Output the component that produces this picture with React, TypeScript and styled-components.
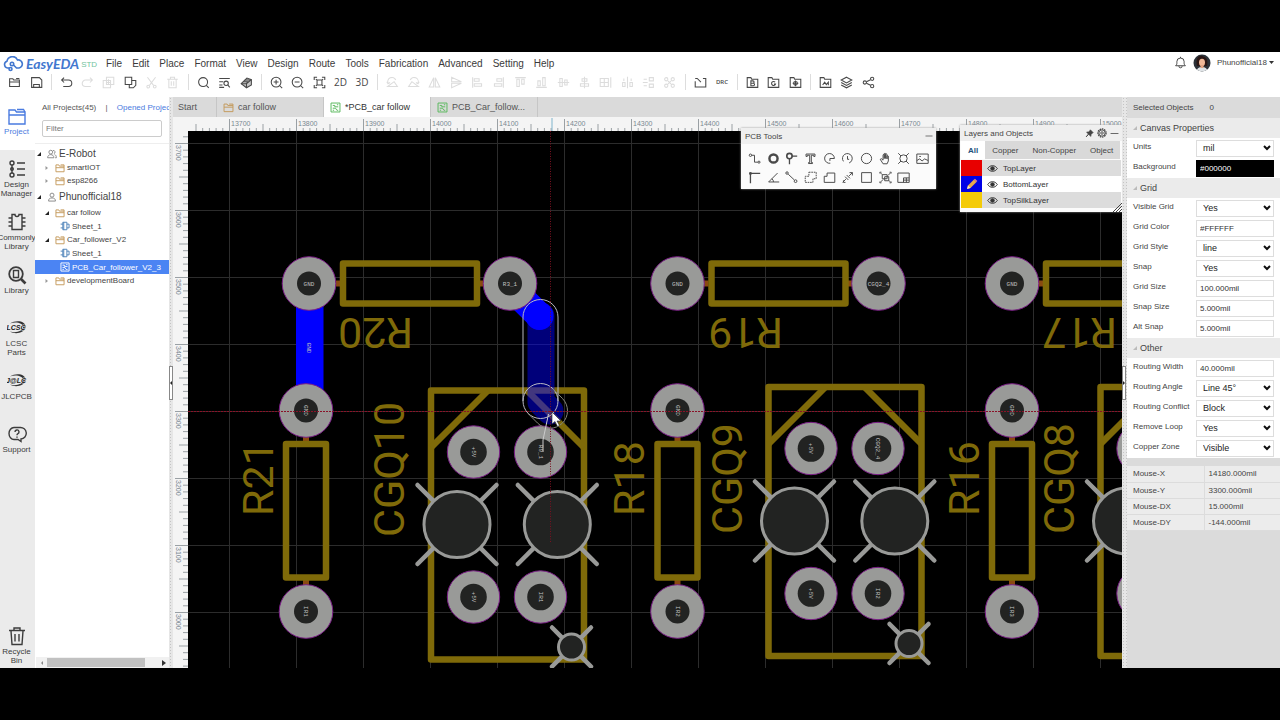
import React, { useEffect, useState } from 'react';
import styled, { createGlobalStyle } from 'styled-components';

const SILK = '#7f6a09';
const COPPER = '#999a98';
const HOLE = '#222322';

const GlobalStyle = createGlobalStyle`
  *, *::before, *::after { box-sizing: border-box; }
  body { margin: 0; background: #000; }
  body, button, input, select { font-family: "Liberation Sans", Arial, sans-serif; }
  button { border: 0; padding: 0; margin: 0; background: none; color: inherit; }
  a { color: inherit; text-decoration: none; }
`;

/* ---------- icons ---------- */

const glyphs: Record<string, React.ReactNode> = {
  open: <><path d="M2 13V3.5h4l1 1.5h7V13z" /><path d="M2 7.5h12M10 3h4" /></>,
  save: <><path d="M2 2h9.5L14.500 5v9H2z" /><path d="M4.500 14v-3.500h7V14" /></>,
  undo: <path d="M5 2 2 5l3 3M2 5h8.500a4 4 0 0 1 0 8H4" />,
  redo: <path d="m11 2 3 3-3 3M14 5H5.500a4 4 0 0 0 0 8H12" />,
  duplicate: <><path d="M5.500 1.500h9v9h-9z" /><path d="M1.500 5.500h9v9h-9zM8 4v6M5 8h6" /></>,
  copy: <><path d="M1.500 1.500h8v9h-8z" /><path d="M9.500 5.500h5v6l-3 3h-5v-4" /></>,
  cut: <><path d="m3 1.500 7.500 10M13 1.500l-7.500 10" /><circle cx="4" cy="13" r="1.700" /><circle cx="12" cy="13" r="1.700" /></>,
  trash: <><path d="M1.500 4h13M5.500 4V1.500h5V4M3.500 4v10.500h9V4M6.500 6.500v5.500M9.500 6.500v5.500" /></>,
  search: <><circle cx="7.500" cy="7.500" r="5.500" /><path d="m11.500 11.500 3 3" /></>,
  find: <><path d="M1.500 3h13M1.500 7h5M1.500 11h4M1.500 14h6" /><circle cx="10" cy="9" r="2.700" /><path d="m12 11 2.500 3" /></>,
  eraser: <><path d="m1.500 9.500 7-7 5.500 2v6.500l-6 3.500z" fill="currentColor" fillOpacity=".3" /><path d="M1.500 9.500h6.500l6-5M8 14.500v-5M4 7h6.500l-3 2.500M6 5h6" /></>,
  zoomIn: <><circle cx="7.500" cy="7.500" r="6" /><path d="M4.500 7.500h6M7.500 4.500v6M12 12l3 3" /></>,
  zoomOut: <><circle cx="7.500" cy="7.500" r="6" /><path d="M4.500 7.500h6M12 12l3 3" /></>,
  fit: <><path d="M1.500 5V1.500H5M11 1.500h3.500V5M14.500 11v3.500H11M5 14.500H1.500V11" /><path d="M5 5h6v6H5zM3.500 4l1.500 1M12.500 4 11 5M3.500 12 5 11M12.500 12 11 11" /></>,
  rotateL: <><path d="M2 13h12l-4-6z" /><path d="M2.500 9A5 5 0 0 1 12 5M1 7l1.500 2.500L5 8" /></>,
  rotateR: <><path d="M2 13h12L6 7z" /><path d="M13.500 9A5 5 0 0 0 4 5M15 7l-1.500 2.500L11 8" /></>,
  flipH: <path d="M7 2v11.500H1.500zM9 2v11.500h5.500z" />,
  flipV: <path d="M2 7V1.500L14 7zM2 9v5.500L14 9z" />,
  alignL: <path d="M2 1.500v13M4 3.500h6v3H4zM4 9.500h9v3H4z" />,
  alignR: <path d="M14 1.500v13M6 3.500h6v3H6zM3 9.500h9v3H3z" />,
  alignT: <path d="M1.500 2h13M3.500 4h3v9h-3zM9.500 4h3v6h-3z" />,
  alignB: <path d="M1.500 14h13M3.500 6h3v6h-3zM9.500 2h3v10h-3z" />,
  alignC: <path d="M1 8h14M3.500 3h3v10h-3zM9.500 5h3v6h-3z" />,
  alignM: <path d="M8 1v14M5 3.500h6v3H5zM3 9.500h10v3H3z" />,
  gridArr: <path d="M1.500 3h10v10h-10zM1.500 8h10M6.500 3v10M14.500 1.500v13" />,
  distH: <path d="M8 1v14M2 8h3v5H2zM11 8h3v5h-3zM3.500 3v3M12.500 3v3" />,
  distV: <path d="M1 8h6M9 2h5v4H9zM9 10h5v4H9zM2 4h4M2 12h4" />,
  distArr: <><circle cx="4" cy="4" r="2" /><circle cx="12" cy="4" r="2" /><circle cx="4" cy="12" r="2" /><circle cx="12" cy="12" r="2" /><path d="M6 6l4 4M10 6l-4 4" /></>,
  outline: <path d="M1.500 6.500v7h13V3H11M1.500 3H4l4.500 4.500" />,
  folderB: <><path d="M1.500 14V2H6l1 2h7.500v10z" /><path d="M6 6h2.500a1.300 1.300 0 0 1 0 3H6zm0 3h3a1.300 1.300 0 0 1 0 3H6z" /></>,
  folderG: <><path d="M1.500 14V2H6l1 2h7.500v10z" /><path d="M10 7.500A2.500 2.500 0 1 0 10.500 10H8.500" /></>,
  folderD: <><path d="M1.500 14V2H6l1 2h7.500v10z" /><circle cx="8" cy="9" r="2.300" /><path d="M8 5.500v7M4.500 9h7" /></>,
  folderL: <><path d="M1.500 14V2H6l1 2h7.500v10z" /><path d="M4.500 11 7 7.500l2 3 2.500-3v4" /></>,
  layers: <><path d="M8 1.500 14.500 5 8 8.500 1.500 5zM1.500 8 8 11.500 14.500 8M1.500 11 8 14.500 14.500 11" /></>,
  share: <><circle cx="3.500" cy="8" r="2" /><circle cx="12.500" cy="3.500" r="2" /><circle cx="12.500" cy="12.500" r="2" /><path d="m5.500 7 5-2.500M5.500 9l5 2.500" /></>,
  bell: <><path d="M2 12c2-2 1.500-3 1.500-5a4.500 4.500 0 0 1 9 0c0 2-.5 3 1.500 5zM6 12.500a2 2 0 0 0 4 0M8 1v1.500" /></>,
  folder: <><path d="M1.500 14V3h4.500l1 2h7.500v9zM1.500 7.500h13M9 3h5.500v2" /></>,
  sheet: <><path d="M4.500 2H11v12H4.500z" /><path d="M1 5h3.500M1 11h3.500M11 5h3.500v6H11M6 2v12" /></>,
  pcb: <><path d="M1.500 1.500h13v13h-13z" /><path d="M4 5h3v2h5M4 9h4l2 3h2M4 12h2M10 4h2" /></>,
  group: <><circle cx="6" cy="5" r="3" /><path d="M1 14c0-3 2-5 5-5s5 2 5 5zM9.500 2.500A2.500 2.500 0 1 1 11 7.500M12 9c2 .5 3 2 3 5h-2" /></>,
  user: <><circle cx="8" cy="5" r="3.200" /><path d="M2.500 14.500c0-3.500 2-5 5.500-5s5.500 1.500 5.500 5z" /></>,
  /* drawing tools */
  track: <><circle cx="3" cy="4" r="1.500" /><path d="M4.500 4H8v8.500h4" /><circle cx="13.500" cy="12.500" r="1.300" /></>,
  pad: <circle cx="8" cy="8" r="5" strokeWidth="3" />,
  via: <><circle cx="5.500" cy="5" r="3.300" strokeWidth="2" /><path d="M8.500 5H15M5.500 8v7" strokeWidth="1.600" /></>,
  text: <path d="M2.500 5.500v-3h11v3h-1.500V4H9v9h1.500v1.200h-5V13H7V4H4v1.500z" />,
  arc: <path d="M8.500 8h5.500A6 6 0 1 0 9 13.800M8.500 8v3" />,
  arcC: <path d="M3 11.500A6 6 0 1 1 10 13.500M8 5v4h2" />,
  circle: <circle cx="8" cy="8" r="6.300" />,
  hand: <path d="M5 14.500 1.500 9l1.500-.7L5 10V3.500q1-1.500 1.500 0V8 2q1-1.500 1.700 0v6V3q1-1.300 1.700 0v5.500V5q1-1.200 1.600 0V11l-1.500 3.500z" />,
  hole: <><circle cx="8" cy="8" r="4.500" /><path d="m1.500 1.500 3.400 3.400M14.500 1.500l-3.400 3.400M1.500 14.500l3.400-3.400M14.500 14.500l-3.400-3.400" /></>,
  image: <><path d="M1 2.500h14v11.500H1z" /><path d="m1 10.500 3.500-2 3 2.500 3-2.500 4.500 2M4 5.500h2" /></>,
  canvasOrigin: <><path d="M3 15V3H15" strokeWidth="1.600" /><path d="M2 2h2v2H2z" fill="currentColor" /></>,
  protractor: <path d="M13 2.500 2 13.500h13M6 9.500a5 5 0 0 1 2 4" />,
  connect: <><circle cx="2.500" cy="2.500" r="1.500" /><path d="m4 4 7.500 7" /><circle cx="13" cy="12.500" r="1.700" /></>,
  copperArea: <path d="M6 1.500h9v8h-4V14H1.500V6.500H6z" strokeDasharray="2 1" />,
  solid: <path d="M1.500 6.500H5v-4h9.500v11.500h-13z" />,
  dimension: <path d="m2 14 4-4M10 6l4-4M5 7l4 4M7 5l4 4M3 11.500v2.500h2.500M10.500 2H14v3.500" />,
  rect: <path d="M2 2h12v12H2z" />,
  groupTool: <><path d="M4 4.500h6v5H4zM7 7h5v5H7z" /><path d="M1 3V1.500h2M13 1.500h2V3M15 13v1.500h-2M3 14.500H1V13M2 2.500l2 2M14 2.500l-3 3M2 13.500l3-3M14 13.500l-2-2" /></>,
  panelize: <><path d="M1 2.500h14v11.500H1z" /><path d="M8 8.500h7M8 8.500V14M11.500 8.500V14M8 11.200h7" /></>,
  eye: <><path d="M1 8c3.500-5.500 10.500-5.500 14 0-3.500 5.500-10.500 5.500-14 0z" /><circle cx="8" cy="8" r="2.600" fill="currentColor" /></>,
  pin: <path d="m9.500 1.500 5 5-1.500.5-2.500 3v3L6.500 9.500 2 14l4-5L3 5.500h3l3-2.500z" fill="currentColor" />,
  gear: <><circle cx="8" cy="8" r="6.500" strokeWidth="2" strokeDasharray="2.500 1.200" /><circle cx="8" cy="8" r="5" /><circle cx="8" cy="8" r="2" /></>,
  minus: <path d="M1 8h14" />,
};

const Svg = styled.svg<{ $size: number; $weight: number }>`
  display: block;
  flex: none;
  width: ${(p) => p.$size}px;
  height: ${(p) => p.$size}px;
  fill: none;
  stroke: currentColor;
  stroke-width: ${(p) => p.$weight};
`;

const Icon = ({ name, size = 12, weight = 1.4 }: { name: string; size?: number; weight?: number }) => (
  <Svg viewBox="0 0 16 16" $size={size} $weight={weight} aria-hidden="true">{glyphs[name]}</Svg>
);

/* ---------- shell ---------- */

const Frame = styled.div`
  display: flex;
  flex-direction: column;
  height: 100vh;
  min-height: 640px;
  padding: 52px 0;
  background: #000;
  color: #444;
  font-size: 8px;
`;

const Header = styled.header`
  display: flex;
  justify-content: space-between;
  height: 45px;
  flex: none;
  background: #fff;
  overflow: hidden;
`;

const MenuRow = styled.div`
  display: flex;
  align-items: center;
  height: 23px;
`;

const Logo = styled.a`
  display: flex;
  align-items: center;
  gap: 2px;
  width: 101px;
  padding-left: 3px;
  color: #4277cf;
  font: italic 700 14px/20px Lato, sans-serif;
  white-space: nowrap;
`;

const Edition = styled.span`
  color: #72c39c;
  font: 8px/10px "Liberation Sans", Arial, sans-serif;
  padding-top: 2px;
`;

const Menu = styled.nav`
  display: flex;
  gap: 10px;
  padding-left: 5px;
  font-size: 10px;
  line-height: 14px;
  color: #3b3b3b;
`;

const ToolRow = styled.div`
  display: flex;
  align-items: center;
  height: 14px;
  padding-left: 6px;
`;

const ToolGroup = styled.div<{ $width: number }>`
  display: flex;
  justify-content: space-between;
  flex: none;
  width: ${(p) => p.$width}px;
`;

const ToolButton = styled.button<{ $off?: boolean }>`
  display: grid;
  place-items: center;
  width: 16px;
  height: 14px;
  color: ${(p) => (p.$off ? '#dcdcdc' : '#484848')};
`;

const ToolWord = styled.span<{ $small?: boolean }>`
  font: ${(p) => (p.$small ? '600 6px' : '400 10px')}/12px "Open Sans", sans-serif;
`;

const Separator = styled.span`
  flex: none;
  width: 14px;
  height: 16px;
  background: linear-gradient(#ddd, #ddd) center / 1px 100% no-repeat;
`;

const Account = styled.div`
  display: flex;
  align-items: center;
  gap: 6px;
  height: 21px;
  padding-right: 6px;
`;

const AccountName = styled.button`
  display: flex;
  align-items: center;
  gap: 2px;
  font-size: 8px;
  color: #444;
`;

const Main = styled.main`
  display: flex;
  flex: 1;
  min-height: 0;
`;

/* ---------- left rail and project panel ---------- */

const Rail = styled.nav`
  display: flex;
  flex-direction: column;
  flex: none;
  width: 35px;
  background: #ebebeb;
  overflow: hidden;
`;

const RailButton = styled.button<{ $active?: boolean; $last?: boolean }>`
  display: flex;
  flex-direction: column;
  align-items: center;
  gap: 1px;
  flex: none;
  width: ${(p) => (p.$active ? 35 : 33)}px;
  height: ${(p) => (p.$last ? 51 : 53)}px;
  margin-top: ${(p) => (p.$last ? 'auto' : 0)};
  padding-top: 9px;
  padding-right: ${(p) => (p.$active ? 2 : 0)}px;
  background: ${(p) => (p.$active ? '#fff' : 'transparent')};
  color: ${(p) => (p.$active ? '#4a7be0' : '#3c3c3c')};
  font-size: 8px;
  line-height: 9px;
`;

const RailArt = styled.svg`
  display: block;
  width: 20px;
  height: 20px;
  flex: none;
  fill: none;
  stroke: currentColor;
  stroke-width: 1.4;
`;

const RailLabel = styled.span`
  white-space: pre;
  text-align: center;
`;

const ProjectPanel = styled.aside`
  display: flex;
  flex-direction: column;
  flex: none;
  width: 134px;
  background: #fff;
  overflow: hidden;
  white-space: nowrap;
`;

const ProjectTabs = styled.div`
  display: flex;
  gap: 7px;
  height: 23px;
  padding: 6px 0 0 7px;
  line-height: 10px;
  color: #555;
`;

const BlueLink = styled.a`
  color: #4a7be0;
`;

const FilterBox = styled.input`
  width: 120px;
  height: 17px;
  margin: 0 7px 6px;
  padding: 0 3px;
  border: 1px solid #ccc;
  border-radius: 2px;
  background: #fff;
  font-size: 8px;
  color: #444;
  &::placeholder { color: #777; opacity: 1; }
`;

const Tree = styled.ul`
  flex: 1;
  min-height: 0;
  margin: 0;
  padding: 2px 0 0;
  border-top: 1px solid #eee;
  list-style: none;
`;

const treeHeight = { first: 15, owner: 19, folder: 13, file: 14 };
const treeIndent = { first: 1, owner: 1, folder: 9, file: 25 };

const TreeRow = styled.li<{ $kind: keyof typeof treeHeight; $selected?: boolean }>`
  display: flex;
  align-items: center;
  gap: 2px;
  height: ${(p) => treeHeight[p.$kind]}px;
  padding-left: ${(p) => treeIndent[p.$kind]}px;
  font-size: ${(p) => (p.$kind === 'first' || p.$kind === 'owner' ? 10 : 8)}px;
  background: ${(p) => (p.$selected ? '#4b84f3' : 'transparent')};
  color: ${(p) => (p.$selected ? '#fff' : '#444')};
`;

const Twisty = styled.svg`
  width: 6px;
  height: 6px;
  margin-right: 3px;
  flex: none;
`;

const TreeIcon = styled.span<{ $color: string }>`
  color: ${(p) => p.$color};
`;

const ScrollTrack = styled.div`
  display: flex;
  align-items: center;
  justify-content: space-between;
  height: 11px;
  margin-left: 1px;
  padding: 0 3px 0 4px;
  background: #f1f1f1;
`;

const ScrollThumb = styled.div`
  flex: 1;
  height: 9px;
  margin: 0 17px 0 3px;
  background: #c1c1c1;
`;

const Splitter = styled.div<{ $wide?: boolean }>`
  display: flex;
  align-items: center;
  flex: none;
  width: ${(p) => (p.$wide ? 5 : 4)}px;
  background: radial-gradient(#c4c4c4 1px, #e6e6e6 1px) 0 0 / 3px 3px;
`;

const SplitHandle = styled.button`
  display: grid;
  place-items: center;
  width: 4px;
  height: 34px;
  border: 1px solid #888;
  background: #fff;
`;

/* ---------- editor ---------- */

const Editor = styled.section`
  display: flex;
  flex-direction: column;
  flex: 1;
  min-width: 0;
`;

const DocTabs = styled.div`
  display: flex;
  flex: none;
  height: 20px;
  background: #dadada;
`;

const DocTab = styled.button<{ $active?: boolean; $home?: boolean }>`
  display: flex;
  align-items: center;
  gap: 4px;
  flex: none;
  width: ${(p) => (p.$home ? 44 : 107)}px;
  padding-left: ${(p) => (p.$home ? 5 : 6)}px;
  border-right: 1px solid #c6c6c6;
  background: ${(p) => (p.$active ? '#fff' : 'transparent')};
  color: ${(p) => (p.$active ? '#333' : '#555')};
  font-size: 9px;
  white-space: nowrap;
`;

const Workspace = styled.div`
  position: relative;
  display: flex;
  flex-direction: column;
  flex: 1;
  min-height: 0;
  background: #f4f4f4;
  overflow: hidden;
`;

const RulerTop = styled.svg`
  display: block;
  flex: none;
  width: 100%;
  height: 14px;
`;

const CanvasRow = styled.div`
  display: flex;
  flex: 1;
  min-height: 0;
`;

const RulerLeft = styled.svg`
  display: block;
  flex: none;
  width: 15px;
  height: 100%;
`;

const Board = styled.svg`
  display: block;
  flex: 1;
  min-width: 0;
  height: 100%;
  background: #000;
`;

const FloatPanel = styled.div<{ $top: number; $right: number; $width: number }>`
  position: absolute;
  top: ${(p) => p.$top}px;
  right: ${(p) => p.$right}px;
  width: ${(p) => p.$width}px;
  background: #fbfbfb;
  box-shadow: 0 0 2px #999;
`;

const FloatTitle = styled.div`
  display: flex;
  align-items: center;
  gap: 3px;
  height: 16px;
  padding: 0 3px 0 4px;
  background: #efefef;
  color: #444;
`;

const Grow = styled.span`
  flex: 1;
`;

const ToolGrid = styled.div`
  display: grid;
  grid-template-columns: repeat(10, 1fr);
  grid-auto-rows: 19px;
  padding: 5px 4px 2px;
`;

const GridButton = styled.button`
  display: grid;
  place-items: center;
  color: #4a4a4a;
`;

const LayerTabs = styled.div`
  display: flex;
  height: 18px;
  margin: 0 2px 1px 1px;
  background: #d9d9d9;
`;

const LayerTab = styled.button<{ $active?: boolean }>`
  padding: 0 7px;
  background: ${(p) => (p.$active ? '#fff' : 'transparent')};
  color: ${(p) => (p.$active ? '#23527c' : '#444')};
  font-size: 8px;
  font-weight: ${(p) => (p.$active ? 700 : 400)};
  white-space: nowrap;
`;

const LayerRow = styled.div<{ $shaded?: boolean }>`
  display: flex;
  align-items: center;
  gap: 5px;
  height: 16px;
  margin: 0 1px;
  background: ${(p) => (p.$shaded ? '#dcdcdc' : '#fff')};
  color: #333;
`;

const Swatch = styled.span<{ $color: string }>`
  display: grid;
  place-items: center;
  width: 21px;
  height: 16px;
  background: ${(p) => p.$color};
`;

const ResizeCorner = styled.svg`
  display: block;
  width: 9px;
  height: 9px;
  margin: -5px 0 0 auto;
  position: relative;
`;

/* ---------- properties ---------- */

const Properties = styled.aside`
  flex: none;
  width: 153px;
  background: #dbdbdb;
  overflow: hidden;
`;

const Selected = styled.div`
  display: flex;
  align-items: center;
  gap: 16px;
  height: 21px;
  padding-left: 6px;
`;

const SectionTitle = styled.h2`
  display: flex;
  align-items: center;
  gap: 3px;
  height: 20px;
  margin: 0;
  padding-left: 6px;
  background: #ebebeb;
  font-size: 9px;
  font-weight: 400;
  color: #444;
`;

const Field = styled.div`
  display: flex;
  align-items: center;
  height: 20px;
  padding-left: 6px;
  background: #fff;
`;

const FieldLabel = styled.label`
  width: 63px;
  padding-bottom: 3px;
  white-space: nowrap;
`;

const TextField = styled.input<{ $dark?: boolean }>`
  width: 78px;
  height: 17px;
  padding: 0 3px;
  border: 1px solid ${(p) => (p.$dark ? '#000' : '#ddd')};
  background: ${(p) => (p.$dark ? '#000' : '#fff')};
  color: ${(p) => (p.$dark ? '#fff' : '#333')};
  font-size: 8px;
`;

const SelectWrap = styled.span`
  display: grid;
  align-items: center;
  width: 78px;
  & > * { grid-area: 1 / 1; }
`;

const SelectBox = styled.select`
  width: 100%;
  height: 17px;
  padding: 0 6px;
  border: 1px solid #ddd;
  border-radius: 0;
  appearance: none;
  background: #fff;
  color: #222;
  font-size: 9px;
`;

const Chevron = styled.svg`
  justify-self: end;
  width: 8px;
  height: 6px;
  margin-right: 3px;
  fill: none;
  stroke: #111;
  stroke-width: 2;
  pointer-events: none;
`;

const Readout = styled.table`
  width: 100%;
  margin-top: 8px;
  border-collapse: collapse;
  background: #ececec;
  td, th {
    height: 16px;
    padding: 0 4px 0 6px;
    border-bottom: 1px solid #dcdcdc;
    font-weight: 400;
    text-align: left;
  }
  th { width: 77px; border-right: 1px solid #dcdcdc; }
  td { padding-left: 4px; }
`;

/* ---------- data ---------- */

type Tool = [name: string, label: string, off?: boolean];

const toolGroups: { width: number; tools: Tool[] }[] = [
  { width: 38, tools: [['open', 'Open'], ['save', 'Save']] },
  { width: 123, tools: [['undo', 'Undo'], ['redo', 'Redo', true], ['duplicate', 'Duplicate', true], ['copy', 'Copy'], ['cut', 'Cut', true], ['trash', 'Delete', true]] },
  { width: 59, tools: [['search', 'Search'], ['find', 'Find'], ['eraser', 'Cleanup']] },
  { width: 102, tools: [['zoomIn', 'Zoom in'], ['zoomOut', 'Zoom out'], ['fit', 'Fit'], ['2D', '2D'], ['3D', '3D']] },
  {
    width: 294,
    tools: ['rotateL', 'rotateR', 'flipH', 'flipV', 'alignL', 'alignR', 'alignT', 'alignB', 'alignC', 'alignM', 'gridArr', 'distH', 'distV', 'distArr']
      .map((n): Tool => [n, n, true]),
  },
  { width: 38, tools: [['outline', 'Board outline'], ['DRC', 'DRC']] },
  { width: 59, tools: [['folderB', 'BOM'], ['folderG', 'Gerber'], ['folderD', 'Pick and place']] },
  { width: 59, tools: [['folderL', 'Import'], ['layers', 'Layers'], ['share', 'Share']] },
];

const menus = ['File', 'Edit', 'Place', 'Format', 'View', 'Design', 'Route', 'Tools', 'Fabrication', 'Advanced', 'Setting', 'Help'];

const drawTools = [
  'track', 'pad', 'via', 'text', 'arc', 'arcC', 'circle', 'hand', 'hole', 'image',
  'canvasOrigin', 'protractor', 'connect', 'copperArea', 'solid', 'dimension', 'rect', 'groupTool', 'panelize',
];

type TreeItem = { kind: keyof typeof treeHeight; text: string; icon: string; color: string; open?: boolean; selected?: boolean };

const tree: TreeItem[] = [
  { kind: 'first', text: 'E-Robot', icon: 'group', color: '#888', open: true },
  { kind: 'folder', text: 'smartIOT', icon: 'folder', color: '#c49a5c' },
  { kind: 'folder', text: 'esp8266', icon: 'folder', color: '#c49a5c' },
  { kind: 'owner', text: 'Phunofficial18', icon: 'user', color: '#888', open: true },
  { kind: 'folder', text: 'car follow', icon: 'folder', color: '#c49a5c', open: true },
  { kind: 'file', text: 'Sheet_1', icon: 'sheet', color: '#4a80b8' },
  { kind: 'folder', text: 'Car_follower_V2', icon: 'folder', color: '#c49a5c', open: true },
  { kind: 'file', text: 'Sheet_1', icon: 'sheet', color: '#4a80b8' },
  { kind: 'file', text: 'PCB_Car_follower_V2_3', icon: 'pcb', color: '#fff', selected: true },
  { kind: 'folder', text: 'developmentBoard', icon: 'folder', color: '#c49a5c' },
];

type FieldSpec = { label: string; value: string; select?: boolean; dark?: boolean };

const sections: { title: string; fields: FieldSpec[] }[] = [
  {
    title: 'Canvas Properties',
    fields: [
      { label: 'Units', value: 'mil', select: true },
      { label: 'Background', value: '#000000', dark: true },
    ],
  },
  {
    title: 'Grid',
    fields: [
      { label: 'Visible Grid', value: 'Yes', select: true },
      { label: 'Grid Color', value: '#FFFFFF' },
      { label: 'Grid Style', value: 'line', select: true },
      { label: 'Snap', value: 'Yes', select: true },
      { label: 'Grid Size', value: '100.000mil' },
      { label: 'Snap Size', value: '5.000mil' },
      { label: 'Alt Snap', value: '5.000mil' },
    ],
  },
  {
    title: 'Other',
    fields: [
      { label: 'Routing Width', value: '40.000mil' },
      { label: 'Routing Angle', value: 'Line 45°', select: true },
      { label: 'Routing Conflict', value: 'Block', select: true },
      { label: 'Remove Loop', value: 'Yes', select: true },
      { label: 'Copper Zone', value: 'Visible', select: true },
    ],
  },
];

const mouse = [
  ['Mouse-X', '14180.000mil'],
  ['Mouse-Y', '3300.000mil'],
  ['Mouse-DX', '15.000mil'],
  ['Mouse-DY', '-144.000mil'],
];

/* ---------- board drawing ---------- */

const GRID = 67;

type Point = { x: number; y: number };

const Legend = ({ x, y, turn = 0, children }: Point & { turn?: number; children: string }) => (
  <text
    transform={`translate(${x} ${y}) rotate(${turn})`}
    textAnchor="middle"
    y="2"
    fontFamily="Liberation Mono, monospace"
    fontSize="6"
    fill="#c0c0c0"
  >
    {children}
  </text>
);

const Pad = ({ x, y, net, turn, small }: Point & { net?: string; turn?: number; small?: boolean }) => (
  <g>
    <circle cx={x} cy={y} r={small ? 26.2 : 26.8} fill={COPPER} stroke="#7a1d86" />
    <circle cx={x} cy={y} r={small ? 13.3 : 12} fill={HOLE} />
    {net && <Legend x={x} y={y} turn={turn}>{net}</Legend>}
  </g>
);

const SilkText = ({ x, y, turn, children }: Point & { turn: number; children: string }) => (
  <text transform={`translate(${x} ${y}) rotate(${turn})`} fontFamily="Roboto, sans-serif" fontSize="43" fill={SILK}>
    {children}
  </text>
);

const ResistorH = ({ x, y, right }: Point & { right?: string }) => (
  <g>
    <path d={`M${x + 26} ${y}h5M${x + 170} ${y}h6`} stroke="#8a4a10" strokeWidth="6" />
    <rect x={x + 34} y={y - 20} width="134" height="40" fill="none" stroke={SILK} strokeWidth="6.500" strokeLinejoin="round" />
    <Pad x={x} y={y} net="GND" />
    <Pad x={x + 201} y={y} net={right} />
  </g>
);

const ResistorV = ({ x, y, bottom }: Point & { bottom: string }) => (
  <g>
    <path d={`M${x} ${y + 26}v5M${x} ${y + 169}v6`} stroke="#8a4a10" strokeWidth="6" />
    <rect x={x - 20} y={y + 33.500} width="40" height="133.500" fill="none" stroke={SILK} strokeWidth="6.500" strokeLinejoin="round" />
    <Pad x={x} y={y} net="GND" turn={90} />
    <Pad x={x} y={y + 201} net={bottom} turn={90} />
  </g>
);

const Drill = ({ x, y, r, reach }: Point & { r: number; reach: number }) => {
  const k = r * 0.707;
  return (
    <g stroke={COPPER} strokeLinecap="round">
      {[[-1, -1], [1, -1], [-1, 1], [1, 1]].map(([sx, sy]) => (
        <path key={`${sx}${sy}`} d={`M${x + sx * k} ${y + sy * k}L${x + sx * reach} ${y + sy * reach}`} strokeWidth="4.500" />
      ))}
      <circle cx={x} cy={y} r={r} fill={HOLE} strokeWidth="3" />
    </g>
  );
};

/* Sensor footprint; x and y are the top left corner of its silkscreen box. */
const Sensor = ({ x, y, power, signal, input }: Point & { power?: string; signal?: string; input?: string }) => (
  <g>
    <g fill="none" stroke={SILK} strokeWidth="6.500" strokeLinejoin="round">
      <rect x={x} y={y} width="153" height="269" />
      <path d={`M${x + 57} ${y}L${x} ${y + 57}M${x + 96} ${y}L${x + 153} ${y + 57}`} />
    </g>
    <Pad x={x + 42.500} y={y + 61.500} net={power} turn={90} small />
    <Pad x={x + 109.500} y={y + 61.500} net={signal} turn={90} small />
    <Pad x={x + 42.500} y={y + 206.500} net={power} turn={90} small />
    <Pad x={x + 109.500} y={y + 206.500} net={input} turn={90} small />
    <Drill x={x + 26} y={y + 134} r={33} reach={39.500} />
    <Drill x={x + 126.300} y={y + 134} r={33} reach={39.500} />
    <Drill x={x + 140.500} y={y + 256.500} r={13} reach={19.500} />
  </g>
);

const BoardDrawing = () => (
  <Board role="img" aria-label="PCB layout">
    <defs>
      <pattern id="grid" x="41" y="12" width={GRID} height={GRID} patternUnits="userSpaceOnUse">
        <path d={`M.5 0V${GRID}M0 .5H${GRID}`} stroke="#2c2c2c" />
      </pattern>
    </defs>
    <rect width="100%" height="100%" fill="url(#grid)" />
    <g transform="translate(-188 -131)">
      <rect x="296" y="296" width="27.500" height="100" fill="#00f" />
      <Legend x={309} y={348} turn={90}>GND</Legend>
      <path d="M510 287L539.500 316" stroke="#00f" strokeWidth="27" strokeLinecap="round" />
      <ResistorH x={309} y={283.500} right="R3_1" />
      <ResistorH x={677.500} y={283.500} right="CGQ2_4" />
      <ResistorH x={1012} y={283.500} />
      <ResistorV x={306} y={410.500} bottom="IR1" />
      <ResistorV x={677.500} y={410.500} bottom="IR2" />
      <ResistorV x={1012} y={410.500} bottom="IR3" />
      <Sensor x={431} y={390.500} power="+5V" signal="R9_1" input="IR1" />
      <Sensor x={768.500} y={387} power="+5V" signal="CGQ2_4" input="IR2" />
      <Sensor x={1100.500} y={387} />
      <SilkText x={413} y={318} turn={180}>R20</SilkText>
      <SilkText x={783} y={318} turn={180}>R19</SilkText>
      <SilkText x={1117} y={318} turn={180}>R17</SilkText>
      <SilkText x={273} y={516} turn={-90}>R21</SilkText>
      <SilkText x={644} y={516} turn={-90}>R18</SilkText>
      <SilkText x={979} y={516} turn={-90}>R16</SilkText>
      <SilkText x={404} y={537} turn={-90}>CGQ10</SilkText>
      <SilkText x={742} y={534} turn={-90}>CGQ9</SilkText>
      <SilkText x={1074} y={534} turn={-90}>CGQ8</SilkText>
    </g>
    <g transform="translate(-188 -131)" fill="none">
      <path d="M541 316V402L550 411" stroke="#00f" strokeOpacity=".48" strokeWidth="27" strokeLinecap="round" strokeLinejoin="round" />
      <circle cx="539.500" cy="316" r="14" fill="#00f" />
      <g stroke="#b9b9c4">
        <path d="M523 401V317a17.500 17.500 0 0 1 35 0V401a17.500 17.500 0 0 1-35 0a17.500 17.500 0 0 1 35 0" />
        <path d="M528 413.500L537.500 423A17.500 17.500 0 0 0 562.500 398.500L553 389" stroke="#85857a" />
      </g>
      <path d="M548.500 414L543 440V452" stroke="#ccc" />
      <path d="M550.500 131V543" stroke="#7a1020" strokeDasharray="1 1.500" />
      <path d="M188 411.500H1122" stroke="#8a1228" strokeDasharray="2 1" />
      <path d="M552 412v12l3-2.500 2.500 5 2-1-2.500-4.500h4z" fill="#fff" stroke="#222" strokeWidth=".6" />
    </g>
  </Board>
);

const useWindowSize = () => {
  const [size, setSize] = useState({ width: window.innerWidth, height: window.innerHeight });
  useEffect(() => {
    const update = () => setSize({ width: window.innerWidth, height: window.innerHeight });
    window.addEventListener('resize', update);
    return () => window.removeEventListener('resize', update);
  }, []);
  return size;
};

const range = (from: number, to: number) => Array.from({ length: Math.max(0, to - from) }, (_, i) => i + from);

/* Both rulers number only as many grid lines as fit beside the side panels. */
const TopRuler = () => {
  const count = Math.floor((useWindowSize().width - 341) / GRID);
  return (
    <RulerTop aria-hidden="true">
      {range(-5, count * 10 + 14).map((i) => {
        const x = 56.5 + (i * GRID) / 10;
        const top = i % 10 === 0 ? 2 : i % 5 === 0 ? 7 : 11;
        return <path key={i} d={`M${x} ${top}V14`} stroke="#9aa0a4" />;
      })}
      {range(0, count).map((i) => (
        <text key={i} x={58 + i * GRID} y="9" fontSize="7" fill="#7a8791">{13700 + i * 100}</text>
      ))}
      <path d="M379 1V14" stroke="#7fb4cc" />
    </RulerTop>
  );
};

const LeftRuler = () => {
  const count = Math.ceil((useWindowSize().height - 235) / GRID);
  return (
    <RulerLeft aria-hidden="true">
      {range(-1, count * 10 + 4).map((i) => {
        const y = 12.5 + (i * GRID) / 10;
        const left = i % 10 === 0 ? 2 : i % 5 === 0 ? 6 : 10;
        return <path key={i} d={`M${left} ${y}H15`} stroke="#9aa0a4" />;
      })}
      {range(0, count).map((i) => (
        <text key={i} transform={`translate(3 ${14 + i * GRID}) rotate(90)`} fontSize="7" fill="#7a8791">{3700 - i * 100}</text>
      ))}
    </RulerLeft>
  );
};

/* ---------- rail pictures ---------- */

const Swoosh = ({ word }: { word: string }) => (
  <>
    <path d="M3 5.500C9 1.500 19 3 18.500 9S8 17 3 13.500C9 15.500 16 13 16 9S9 3.500 3 5.500z" fill="#333" stroke="none" />
    <text x="9" y="12" textAnchor="middle" fontSize="7" fontWeight="700" fontStyle="italic" fill="#222" stroke="#ebebeb" strokeWidth="1" paintOrder="stroke">{word}</text>
  </>
);

const rail: { label: string; art: React.ReactNode; active?: boolean; last?: boolean }[] = [
  { label: 'Project', active: true, art: <path d="M2 18V4h6l1.500 2H18v12zM2 9h16M10 3.500h6.500L18 6" /> },
  {
    label: 'Design\nManager',
    art: <><circle cx="5" cy="4" r="2" /><circle cx="5" cy="16" r="2" /><circle cx="5" cy="10" r="1.300" /><path d="M5 6v8M10 4h8M10 10h8M10 16h8" /></>,
  },
  { label: 'Commonly\nLibrary', art: <path d="M5 2.500h3a2 2 0 0 0 4 0h3v15H5zM1.500 6H5M1.500 10H5M1.500 14H5M15 6h3.500M15 10h3.500M15 14h3.500" /> },
  {
    label: 'Library',
    art: <><circle cx="9" cy="9" r="6.800" strokeWidth="1.800" /><path d="M6.500 5.500h5v7h-5z" /><path d="m14 14 4.500 4.500" strokeWidth="2.600" /></>,
  },
  { label: 'LCSC\nParts', art: <Swoosh word="LCSC" /> },
  { label: 'JLCPCB', art: <Swoosh word="J@LC" /> },
  {
    label: 'Support',
    art: <><path d="M7 3.500h6a5 5 0 0 1 1 11.500v2.500L11 15.500H7a5 6 0 0 1 0-12z" /><path d="M8 8a2 2 0 1 1 2.700 1.800Q10 10.200 10 11.200M10 12.500v1.200" /></>,
  },
  {
    label: 'Recycle\nBin',
    last: true,
    art: <path d="M2 4.500h16M7 4.500V2h6v2.500M4 5l1 13.500h10L16 5M8 8v7.500M12 8v7.500" />,
  },
];

const Property = ({ spec }: { spec: FieldSpec }) => {
  const id = spec.label.toLowerCase().replace(/ /g, '-');
  return (
    <Field>
      <FieldLabel htmlFor={id}>{spec.label}</FieldLabel>
      {spec.select ? (
        <SelectWrap>
          <SelectBox id={id} defaultValue={spec.value}><option>{spec.value}</option></SelectBox>
          <Chevron viewBox="0 0 8 6" aria-hidden="true"><path d="M1 1l3 3 3-3" /></Chevron>
        </SelectWrap>
      ) : (
        <TextField id={id} defaultValue={spec.value} $dark={spec.dark} />
      )}
    </Field>
  );
};

const layers = [
  { name: 'TopLayer', color: '#e80000', shaded: true },
  { name: 'BottomLayer', color: '#0000e6', editing: true },
  { name: 'TopSilkLayer', color: '#f4cb08', shaded: true },
];

export default function App() {
  return (
    <Frame>
      <GlobalStyle />
      <Header>
        <div>
          <MenuRow>
            <Logo href="#home">
              <svg width="21" height="16" viewBox="0 0 21 16" fill="none" stroke="currentColor" strokeWidth="1.600" aria-hidden="true">
                <path d="M6 12H4.500A3.500 3.500 0 0 1 4 5.200 5.500 5.500 0 0 1 14.500 4 4 4 0 1 1 16 12H13.500L10.500 9" />
                <circle cx="9" cy="8" r="1.700" />
                <circle cx="7.500" cy="13" r="1.500" />
              </svg>
              <span>EasyEDA</span>
              <Edition>STD</Edition>
            </Logo>
            <Menu>{menus.map((m) => <a key={m} href={`#${m}`}>{m}</a>)}</Menu>
          </MenuRow>
          <ToolRow>
            {toolGroups.map((g, i) => (
              <React.Fragment key={i}>
                {i > 0 && <Separator />}
                <ToolGroup $width={g.width}>
                  {g.tools.map(([name, label, off]) => (
                    <ToolButton key={name} $off={off} aria-label={label}>
                      {glyphs[name] ? <Icon name={name} size={13} weight={1.3} /> : <ToolWord $small={name === 'DRC'}>{name}</ToolWord>}
                    </ToolButton>
                  ))}
                </ToolGroup>
              </React.Fragment>
            ))}
          </ToolRow>
        </div>
        <Account>
          <Icon name="bell" size={13} weight={1.2} />
          <svg width="18" height="18" viewBox="0 0 18 18" aria-hidden="true">
            <clipPath id="face"><circle cx="9" cy="9" r="8.500" /></clipPath>
            <g clipPath="url(#face)">
              <rect width="18" height="18" fill="#2b3138" />
              <path d="M4 12C2 3 7 1 9 2s7 1 5 10z" fill="#2a1614" />
              <ellipse cx="9" cy="8.500" rx="3" ry="3.800" fill="#f0b898" />
              <path d="M3 18q1-5 6-5t6 5z" fill="#dfe3e6" />
              <path d="M7.500 11h3v3h-3z" fill="#e2a484" />
            </g>
          </svg>
          <AccountName>
            Phunofficial18
            <svg width="5" height="3" viewBox="0 0 5 3" aria-hidden="true"><path d="M0 0h5L2.500 3z" fill="#333" /></svg>
          </AccountName>
        </Account>
      </Header>

      <Main>
        <Rail>
          {rail.map((r) => (
            <RailButton key={r.label} $active={r.active} $last={r.last}>
              <RailArt viewBox="0 0 20 20" aria-hidden="true">{r.art}</RailArt>
              <RailLabel>{r.label}</RailLabel>
            </RailButton>
          ))}
        </Rail>

        <ProjectPanel>
          <ProjectTabs>
            <a href="#all">All Projects(45)</a>
            <span>&nbsp;|&nbsp;</span>
            <BlueLink href="#opened">Opened Projects</BlueLink>
          </ProjectTabs>
          <FilterBox placeholder="Filter" aria-label="Filter" />
          <Tree>
            {tree.map((t, i) => (
              <TreeRow key={i} $kind={t.kind} $selected={t.selected}>
                {t.kind !== 'file' && (
                  <Twisty viewBox="0 0 6 6" aria-hidden="true">
                    {t.open ? <path d="M5 1v4H1z" fill="#222" /> : <path d="M1.500 1 4 3 1.500 5z" fill="#999" />}
                  </Twisty>
                )}
                <TreeIcon $color={t.color}><Icon name={t.icon} size={10} weight={1.5} /></TreeIcon>
                {t.text}
              </TreeRow>
            ))}
          </Tree>
          <ScrollTrack>
            <svg width="4" height="6" viewBox="0 0 4 6" aria-hidden="true"><path d="M3 1v4L1 3z" fill="#888" /></svg>
            <ScrollThumb />
            <svg width="4" height="6" viewBox="0 0 4 6" aria-hidden="true"><path d="M0 0v6l4-3z" fill="#333" /></svg>
          </ScrollTrack>
        </ProjectPanel>

        <Splitter>
          <SplitHandle aria-label="Collapse left panel">
            <svg width="2" height="4" viewBox="0 0 2 4" aria-hidden="true"><path d="M2 0v4L0 2z" fill="#222" /></svg>
          </SplitHandle>
        </Splitter>

        <Editor>
          <DocTabs>
            <DocTab $home>Start</DocTab>
            <DocTab><TreeIcon $color="#c49a5c"><Icon name="folder" size={11} /></TreeIcon>car follow</DocTab>
            <DocTab $active><TreeIcon $color="#58b85c"><Icon name="pcb" size={11} /></TreeIcon>*PCB_car follow</DocTab>
            <DocTab><TreeIcon $color="#58b85c"><Icon name="pcb" size={11} /></TreeIcon>PCB_Car_follow...</DocTab>
          </DocTabs>
          <Workspace>
            <TopRuler />
            <CanvasRow>
              <LeftRuler />
              <BoardDrawing />
            </CanvasRow>

            <FloatPanel $top={11} $right={186} $width={195}>
              <FloatTitle>PCB Tools<Grow /><Icon name="minus" size={8} /></FloatTitle>
              <ToolGrid>
                {drawTools.map((t) => (
                  <GridButton key={t} aria-label={t}><Icon name={t} size={13} weight={1.2} /></GridButton>
                ))}
              </ToolGrid>
            </FloatPanel>

            <FloatPanel $top={8} $right={0} $width={162}>
              <FloatTitle>
                Layers and Objects<Grow />
                <Icon name="pin" size={9} /><Icon name="gear" size={10} /><Icon name="minus" size={9} />
              </FloatTitle>
              <LayerTabs>
                {['All', 'Copper', 'Non-Copper', 'Object'].map((t) => <LayerTab key={t} $active={t === 'All'}>{t}</LayerTab>)}
              </LayerTabs>
              {layers.map((l) => (
                <LayerRow key={l.name} $shaded={l.shaded}>
                  <Swatch $color={l.color}>
                    {l.editing && (
                      <svg width="12" height="12" viewBox="0 0 12 12" aria-hidden="true">
                        <path d="M1 11l1-3.500L8 1.500 10.500 4l-6 6z" fill="#e9a94c" />
                        <path d="M8 1.500 9 .7l2.300 2.300-.8 1z" fill="#e88" />
                        <path d="M1 11l1-3.500L4.500 10z" fill="#f6e3c0" />
                      </svg>
                    )}
                  </Swatch>
                  <Icon name="eye" size={11} />
                  {l.name}
                </LayerRow>
              ))}
              <ResizeCorner viewBox="0 0 9 9" aria-hidden="true"><path d="M0 9 9 0M3 9l6-6M6 9l3-3" stroke="#444" /></ResizeCorner>
            </FloatPanel>
          </Workspace>
        </Editor>

        <Splitter $wide>
          <SplitHandle aria-label="Collapse right panel">
            <svg width="2" height="4" viewBox="0 0 2 4" aria-hidden="true"><path d="M0 0v4l2-2z" fill="#222" /></svg>
          </SplitHandle>
        </Splitter>

        <Properties>
          <Selected><span>Selected Objects</span><span>0</span></Selected>
          {sections.map((s) => (
            <section key={s.title}>
              <SectionTitle>
                <svg width="4" height="4" viewBox="0 0 4 4" aria-hidden="true"><path d="M4 0v4H0z" fill="#bbb" /></svg>
                {s.title}
              </SectionTitle>
              {s.fields.map((f) => <Property key={f.label} spec={f} />)}
            </section>
          ))}
          <Readout>
            <tbody>
              {mouse.map(([k, v]) => <tr key={k}><th scope="row">{k}</th><td>{v}</td></tr>)}
            </tbody>
          </Readout>
        </Properties>
      </Main>
    </Frame>
  );
}
